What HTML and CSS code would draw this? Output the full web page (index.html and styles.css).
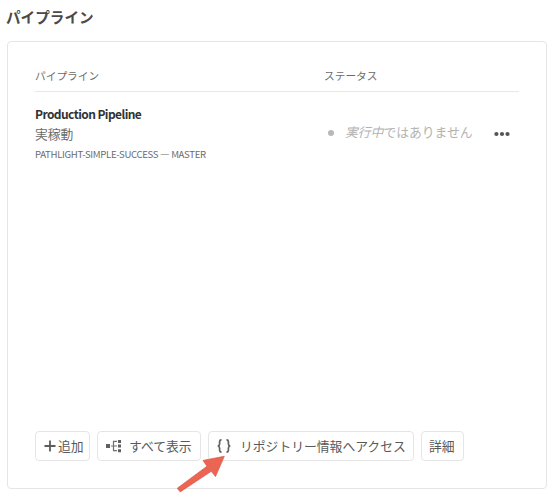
FILE: index.html
```html
<!DOCTYPE html>
<html lang="ja">
<head>
<meta charset="utf-8">
<title>パイプライン</title>
<link rel="stylesheet" href="styles.css">
</head>
<body>
<h1 class="title">パイプライン</h1>
<main class="card">
  <div class="row head"><span>パイプライン</span><span>ステータス</span></div>
  <div class="row item">
    <div class="info">
      <div class="name">Production Pipeline</div>
      <div class="env">実稼動</div>
      <div class="branch">PATHLIGHT-SIMPLE-SUCCESS — MASTER</div>
    </div>
    <div class="status">
      <span class="dot"></span>
      <span class="state"><em>実行中</em>ではありません</span>
      <svg class="more" width="16" height="6" viewBox="0 0 16 6"><circle cx="2.4" cy="3" r="2.1"/><circle cx="8" cy="3" r="2.1"/><circle cx="13.5" cy="3" r="2.1"/></svg>
    </div>
  </div>
  <div class="actions">
    <button class="btn add"><svg width="12" height="12" viewBox="0 0 12 12"><path d="M6 .5v11M.5 6h11" stroke="#5c5c5c" stroke-width="1.8"/></svg>追加</button>
    <button class="btn all"><svg width="16" height="14" viewBox="0 0 16 14"><path d="M0 5h4v4H0zM12 1h3v3h-3zM12 5.5h3v3h-3zM12 10.2h3v3h-3z" fill="#606060"/><path d="M5 7h6M11 2.4H7.5v9.3H11" fill="none" stroke="#707070" stroke-width="1.2"/></svg>すべて表示</button>
    <button class="btn repo"><svg width="14" height="14" viewBox="0 0 14 14"><path d="M4.5.8C2.9.8 2.6 1.4 2.6 2.7v2.2C2.6 6.2 2 6.8.8 7c1.2.2 1.8.8 1.8 2.1v2.2c0 1.3.3 1.9 1.9 1.9M9.5.8c1.6 0 1.9.6 1.9 1.9v2.2c0 1.3.6 1.9 1.8 2.1-1.2.2-1.8.8-1.8 2.1v2.2c0 1.3-.3 1.9-1.9 1.9" fill="none" stroke="#626262" stroke-width="1.7"/></svg>リポジトリー情報へアクセス</button>
    <button class="btn detail">詳細</button>
  </div>
</main>
<svg class="pointer" width="50" height="42" viewBox="0 0 50 42"><path d="M1.3 36.2 31 14.2 27 8.4 48.3 4.3 39.5 24.6 35.3 19.3 4.2 39.9Z" fill="#ec6452" stroke="#d95747" stroke-width=".7"/></svg>
</body>
</html>
```
FILE: styles.css
```css
* { box-sizing: border-box; }
body {
  margin: 0;
  height: 499px;
  padding: 7px 3px 0 6px;
  overflow: hidden;
  background: #fff;
  color: #6b6b6b;
  font-family: "Noto Sans CJK JP", sans-serif;
}
.title {
  margin: 0;
  height: 34px;
  font: 700 14.6px/20px "Noto Sans CJK JP", sans-serif;
  color: #4a4a4a;
}
.card {
  display: flex;
  flex-direction: column;
  height: 448px;
  margin-left: 1px;
  padding: 25px 27px 27px;
  border: 1px solid #e5e5e5;
  border-radius: 4px;
}
.row {
  display: grid;
  grid-template-columns: 289px 1fr;
}
.head {
  height: 25px;
  border-bottom: 1px solid #e8e8e8;
  font: 10.7px/18px "Noto Sans CJK JP", sans-serif;
}
.item { padding-top: 13px; }
.name {
  font: 700 12px/18px "Noto Sans CJK JP", sans-serif;
  letter-spacing: -0.58px;
  color: #323232;
  white-space: nowrap;
}
.env {
  font: 12.8px/21px "Noto Sans CJK JP", sans-serif;
}
.branch {
  font: 9.6px/20px "Noto Sans CJK JP", sans-serif;
  letter-spacing: -0.33px;
  white-space: nowrap;
}
.status {
  display: flex;
  align-items: center;
  height: 22px;
  margin-top: 16px;
  padding-left: 4px;
}
.dot {
  width: 6px;
  height: 6px;
  margin: 1px 11px 0 0;
  border-radius: 50%;
  background: #b8b8b8;
}
.state {
  width: 149px;
  font: 12.8px/20px "Noto Sans CJK JP", sans-serif;
  color: #b3b3b3;
  white-space: nowrap;
}
.more { margin-top: 3px; fill: #555; }
.actions {
  display: flex;
  gap: 7px;
  margin-top: auto;
}
.btn {
  display: flex;
  align-items: center;
  height: 30px;
  padding: 0 0 0 8px;
  border: 1px solid #e5e5e5;
  border-radius: 4px;
  background: #fff;
  color: #595959;
  font: 12.8px/20px "Noto Sans CJK JP", sans-serif;
  white-space: nowrap;
}
.add { width: 55px; gap: 2px; }
.all { width: 104px; gap: 7px; }
.repo { width: 206px; gap: 9px; }
.detail { width: 43px; padding-left: 7px; }
.pointer {
  position: absolute;
  left: 176px;
  top: 452px;
}
```
